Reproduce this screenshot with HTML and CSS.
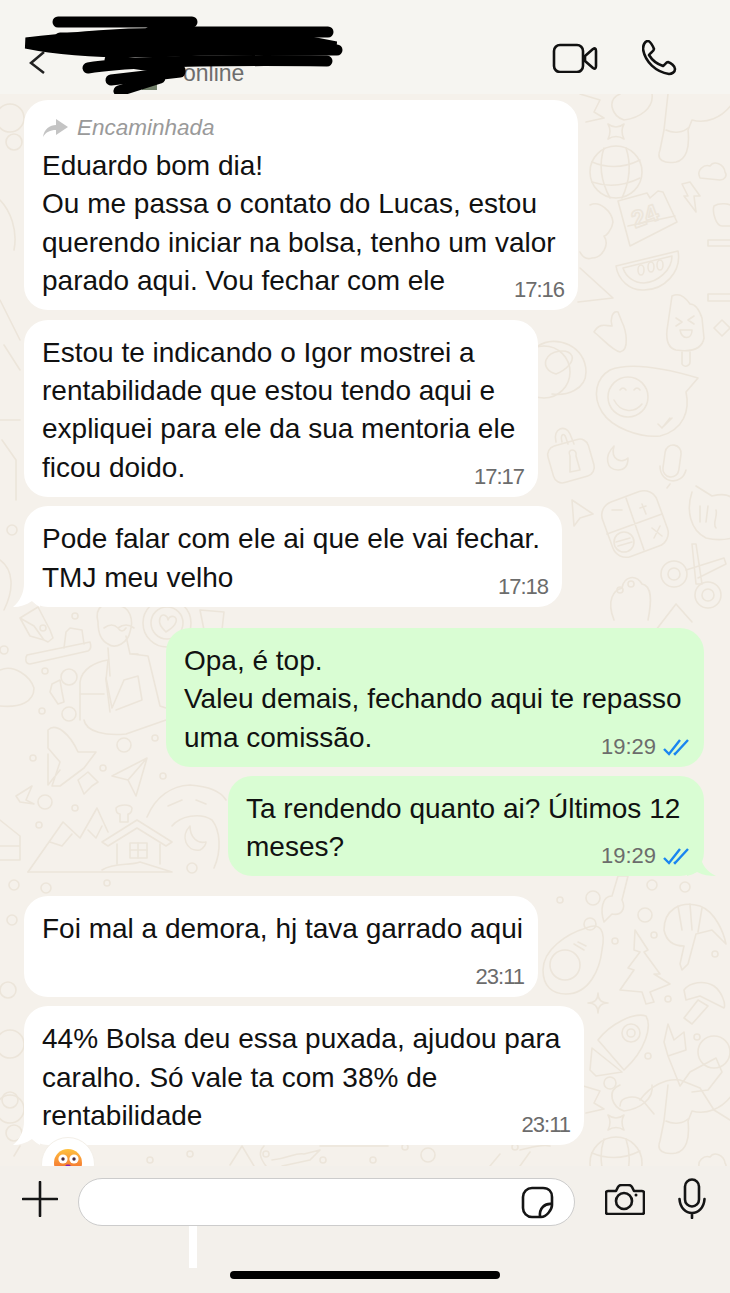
FILE: index.html
```html
<!DOCTYPE html>
<html>
<head>
<meta charset="UTF-8">
<meta name="viewport" content="width=device-width, initial-scale=1">
<link rel="stylesheet" href="styles.css">
</head>
<body>

<div class="phone">

  <div class="top-bar">
    <svg class="back" viewBox="0 0 18 24"><path d="M16 2 L3 13 L16 23"/></svg>
    <span class="status">online</span>
    <div class="top-icons">
      <svg class="ico-video" viewBox="0 0 46 30"><rect x="2" y="2" width="29" height="27" rx="6"/><path d="M33 13 L41 6 Q44 4 44 8 V23 Q44 27 41 25 L33 18 Z"/></svg>
      <svg class="ico-phone" viewBox="0 0 35 36"><path d="M1 9 C1 5 3 1 6 1 C8 1 11 6 12 9 C12 11 8 13 7 15 C10 20 15 24 21 26 C23 25 24 22 26 22 C29 23 33 26 33 29 C33 32 30 34 27 34 C14 32 3 22 1 9 Z"/></svg>
    </div>
    <!-- name and photo scribbled out -->
    <svg class="scribble" viewBox="0 0 730 100">
      <path class="avatar-bit" d="M142 78 H157 V90 H142 Z"/>
      <path class="avatar-bit" d="M142 52 H176 V56 H142 Z"/>
      <path d="M58 22 H192"/>
      <path d="M150 32 H328"/>
      <path d="M26 43 C70 38 120 32 180 34 L280 36 L336 47 L200 50 C130 54 70 52 26 43 Z" class="fill"/>
      <path d="M90 50 H337" />
      <path d="M60 38 H280"/>
      <path d="M88 68 C140 60 240 60 327 61"/>
      <path d="M111 80 L180 72"/>
      <path d="M119 91 L160 78"/>
      <path d="M110 60 L180 70" />
    </svg>
  </div>

  <div class="chat">
    <svg class="wallpaper" viewBox="0 94 730 1072">
      <defs>
        <g id="tile">
          <!-- top right: star, globe, calendar, melon -->
          <path d="M608 124 Q616 130 624 124 Q620 131 624 139 Q616 134 608 139 Q612 131 608 124 Z"/>
          <circle cx="616" cy="172" r="26"/>
          <path d="M592 162 Q616 172 640 160 M592 182 Q616 190 640 178 M604 148 Q596 172 610 198 M626 148 Q634 172 622 198"/>
          <path d="M618 201 L647 193 L650 198 L658 191 L663 192 L677 222 L630 246 Z M628 226 L675 216"/>
          <text x="632" y="226" class="doodle-num" transform="rotate(-20 640 218)">24</text>
          <path d="M616 266 L678 251 C682 272 664 290 644 290 C630 291 618 280 616 266 Z M623 268 L672 256 C672 270 658 282 644 283 C634 283 626 277 623 268 Z"/>
          <ellipse cx="641" cy="270" rx="3" ry="5"/><ellipse cx="651" cy="267" rx="3" ry="5"/><ellipse cx="660" cy="265" rx="3" ry="5"/>
          <!-- cloud, mountain -->
          <path d="M590 205 C600 200 612 212 613 222 C612 230 606 236 604 236 C610 245 602 258 592 258 C586 260 582 256 580 252"/>
          <path d="M580 268 L613 298 L578 302"/>
          <path d="M700 178 C696 170 704 164 710 166 C714 160 724 164 725 172 C728 176 724 180 720 180 Z"/>
          <path d="M682 184 L690 182 L700 196 L694 196 L696 212 L684 196 L688 196 Z"/>
          <path d="M714 206 C720 202 730 204 732 206 V226 H722 C716 226 712 212 714 206 Z"/>
          <path d="M708 240 H732 V246 H708 Z M708 294 H732 V301 H708 Z"/>
          <!-- popsicle, chili -->
          <path d="M672 296 C680 292 686 298 690 304 C696 304 700 312 702 318 L704 338 C702 350 690 352 676 350 C668 348 666 340 667 330 Z"/>
          <path d="M676 318 L682 322 L676 326 M694 316 L688 320 L694 324 M680 330 H692 C692 340 682 340 680 330 Z"/>
          <path d="M682 352 V364 C684 368 690 366 690 362 V352"/>
          <path d="M594 332 C604 340 612 350 620 352 C630 350 626 330 622 322 L618 312 C612 310 610 320 612 326 C606 326 600 322 594 332 Z"/>
          <path d="M722 320 L730 328 L722 336 L714 328 Z"/>
          <!-- legs at the top -->
          <path d="M668 94 L664 130 L660 150 C656 160 664 164 676 162 C686 160 690 148 688 130 L692 120 C706 124 722 118 732 104"/>
          <path d="M666 130 C674 134 684 132 688 128"/>
          <path d="M620 94 C606 100 612 116 624 120 C640 118 654 108 652 94"/>
          <path d="M580 94 L600 100 L594 112 L604 118 L586 122"/>
          <!-- chat bubble with smile -->
          <path d="M610 370 C630 362 664 368 698 378 L686 392 C690 410 684 430 660 436 C640 438 612 428 602 412 C592 396 596 378 610 370 Z"/>
          <circle cx="628" cy="397" r="20"/>
          <path d="M614 400 C620 412 634 414 642 404 M620 390 Q623 386 626 390 M634 390 Q637 386 640 390"/>
          <path d="M658 424 L662 428 L670 418 M664 426 L672 418"/>
          <circle cx="544" cy="372" r="26" class="thin"/>
          <path d="M538 346 C556 334 586 346 586 372 C586 390 566 396 552 394 M546 360 C550 350 568 348 572 356 C574 362 566 370 556 374 C548 372 544 366 546 360 Z"/>
          <!-- lock, moon, mic -->
          <rect x="550" y="442" width="42" height="38" rx="9" transform="rotate(-16 571 461)"/>
          <path d="M556 442 C552 428 566 424 570 434 L574 444 M562 442 C560 434 564 432 566 438 L568 444"/>
          <path d="M570 456 C566 448 578 448 576 456 L580 470 L570 472 Z"/>
          <path d="M614 446 C604 456 606 470 618 470 C626 470 628 464 628 458 C622 464 610 460 614 446 Z"/>
          <rect x="664" y="445" width="16" height="32" rx="8" transform="rotate(8 672 461)"/>
          <path d="M660 466 C660 484 682 486 686 470 M670 484 L667 488"/>
          <!-- calculator -->
          <rect x="606" y="495" width="58" height="58" rx="14" transform="rotate(-20 635 524)"/>
          <path d="M626 498 L644 550 M607 534 L662 514 M612 510 H622 M640 508 L646 506 M642 504 L646 514 M652 528 L662 536 M660 526 L654 538 M616 542 L630 538 M618 546 L632 542"/>
          <circle cx="624" cy="542" r="10"/>
          <!-- cat, arrow, scissors, paw -->
          <path d="M696 486 L712 496 C720 494 728 494 732 498 M692 492 C686 510 690 530 706 538 C714 540 724 540 732 538"/>
          <path d="M700 506 V522 M708 506 L706 522 M716 510 C718 516 712 524 716 528"/>
          <path d="M572 500 L593 514 L580 518 L574 526 Z"/>
          <circle cx="674" cy="574" r="13"/><circle cx="674" cy="574" r="6"/>
          <circle cx="708" cy="595" r="13"/><circle cx="708" cy="595" r="6"/>
          <path d="M686 570 L724 558 L726 564 L698 578 M692 544 L696 544 L702 584 L696 584 Z"/>
          <path d="M614 620 C606 600 614 590 622 588 C624 576 636 574 642 584 C652 586 652 600 648 620"/>
          <circle cx="620" cy="590" r="3"/><circle cx="631" cy="584" r="3"/>
          <path d="M656 630 L676 604 L692 622"/>
          <!-- below bubble 3: cup, cake, man -->
          <path d="M20 618 L38 607 L50 630 L53 638 L48 642 L44 640 L34 626 Z M20 618 L30 636 L44 640"/>
          <path d="M27 655 L90 642 C92 648 90 650 88 651 L30 664 C25 664 25 658 27 655 Z"/>
          <path d="M64 648 L66 632 L70 628 L82 630 L84 644"/>
          <path d="M98 622 C94 606 106 600 118 606 C130 606 134 620 130 632 C128 642 116 650 108 644 C100 640 98 632 98 622 Z"/>
          <path d="M104 628 Q112 622 118 628 Q126 622 134 628 M118 628 Q122 634 126 628"/>
          <path d="M108 648 L110 676 M126 636 L130 654 L138 654"/>
          <path d="M80 720 L80 682 C82 668 96 662 108 660 L106 680 L110 712 M132 654 L148 656 L160 706 L166 708"/>
          <path d="M80 694 L104 694 M84 720 C86 732 106 736 126 734 L166 720 M106 678 L112 708 L124 680 L138 676 L142 700 L116 710"/>
          <circle cx="167" cy="623" r="24"/><circle cx="167" cy="623" r="16"/>
          <path d="M160 618 C162 612 168 616 168 620 C170 614 178 616 176 622 C174 628 168 630 166 632 C162 628 158 624 160 618 Z"/>
          <path d="M200 610 L224 612 L222 630 L204 630 Z"/>
          <path d="M0 670 C14 664 30 676 34 688 C34 702 20 708 0 706"/>
          <path d="M52 684 L60 680 L62 692 L64 702 L58 704 L50 692 Z"/>
          <circle cx="69" cy="677" r="8"/><circle cx="45" cy="671" r="3"/><circle cx="42" cy="711" r="3"/><circle cx="69" cy="714" r="7"/><circle cx="43" cy="628" r="3"/><circle cx="75" cy="616" r="3"/><circle cx="4" cy="650" r="4"/>
          <circle cx="124" cy="745" r="7"/><circle cx="155" cy="738" r="3"/><circle cx="103" cy="768" r="3"/><circle cx="163" cy="776" r="3"/><circle cx="45" cy="802" r="7"/><circle cx="33" cy="758" r="3"/><circle cx="75" cy="808" r="3"/><circle cx="39" cy="825" r="3"/>
          <!-- rocket, plane, mountains, house -->
          <path d="M48 730 C56 722 70 734 78 752 L96 752 L84 768 L60 786 L52 786 L60 762 L48 748 Z M48 754 L48 785 L60 770"/>
          <path d="M78 780 L84 794 L92 786 L98 782 L88 772 Z"/>
          <path d="M112 776 L147 758 L136 796 L128 780 Z M128 780 L147 758"/>
          <path d="M16 796 L32 786 L26 800 L34 804 L20 802 Z" />
          <path d="M28 872 L63 822 L80 838 L97 808 L108 832 M50 842 L62 846 L72 834 M88 830 L96 838 L102 826"/>
          <path d="M28 872 H172 M102 870 C114 862 130 866 140 862 L172 872"/>
          <path d="M102 842 L137 820 L172 842 L166 846 L137 828 L108 846 Z"/>
          <path d="M117 844 V864 M160 844 V864"/>
          <rect x="130" y="843" width="17" height="15"/>
          <path d="M130 850 H147 M138 843 V858"/>
          <path d="M116 808 C120 804 130 804 132 808 C132 814 128 814 128 814 V822 H120 V814 C118 814 116 812 116 808 Z"/>
          <path d="M147 817 C156 796 172 786 190 785 C204 786 220 790 226 800 M168 806 L182 800 M196 800 L206 804 M172 826 C180 816 200 812 212 820 C220 830 222 850 214 868"/>
          <path d="M190 826 C180 836 186 852 200 850 C204 848 206 844 206 842 C198 844 190 838 190 826 Z"/>
          <circle cx="192" cy="868" r="5"/>
          <path d="M0 820 L20 836 V860 H0 M0 846 H20"/>
          <circle cx="14" cy="885" r="5"/><circle cx="46" cy="888" r="5"/><circle cx="107" cy="883" r="3"/>
          <!-- right side lower -->
          <path d="M543 970 C543 950 566 934 586 928 C600 922 606 930 602 950 C600 968 590 994 566 994 C552 994 543 986 543 970 Z"/>
          <circle cx="565" cy="965" r="15"/>
          <path d="M574 944 L584 950 M578 942 L586 946"/>
          <path d="M604 922 L612 914 C622 916 626 908 622 900 L628 876 L618 876 L612 896 C602 896 600 910 604 922 Z"/>
          <path d="M620 990 L634 970 L628 968 L640 952 L634 950 L635 930 L648 950 L644 952 L660 974 L654 974 L670 984 L650 992 L654 1002 L646 1004 L642 992 Z"/>
          <circle cx="645" cy="915" r="7"/><circle cx="652" cy="885" r="5"/><circle cx="685" cy="887" r="5"/><circle cx="615" cy="941" r="3"/><circle cx="654" cy="935" r="3"/><circle cx="715" cy="954" r="3"/><circle cx="668" cy="999" r="3"/><circle cx="560" cy="900" r="3"/><circle cx="590" cy="924" r="6"/><circle cx="593" cy="898" r="7"/>
          <path d="M664 930 C664 910 680 900 700 906 C716 912 724 934 726 944 L712 930 L696 934 L688 964 L682 970 L680 964 L684 946 C672 946 666 940 664 930 Z"/>
          <path d="M678 906 L682 930 M690 904 L692 930 M702 908 L698 932"/>
          <path d="M684 990 C690 982 704 980 714 986 C722 992 726 1004 724 1008 L700 996 L686 1000 Z M698 1000 L708 1006 L692 1024 L684 1018 Z"/>
          <path d="M598 993 Q598 1003 588 1003 Q598 1003 598 1013 Q598 1003 608 1003 Q598 1003 598 993 Z"/>
          <path d="M598 1040 C610 1024 634 1012 646 1016 C652 1026 646 1050 624 1070 Z M592 1048 L622 1072 L596 1076 L590 1070 Z"/>
          <circle cx="631" cy="1033" r="9"/><circle cx="631" cy="1033" r="4"/>
          <path d="M668 1024 L674 1040 L684 1032 L686 1050 L668 1056 L664 1042 Z M668 1056 L680 1086 L690 1072 L716 1058 L722 1072 L708 1090 L692 1092"/>
          <path d="M640 1100 C650 1086 666 1078 680 1080 L700 1088 L714 1110 L730 1120"/>
          <circle cx="714" cy="1052" r="16"/>
          <path d="M620 1106 C620 1096 636 1094 644 1102 L654 1114"/>
          <circle cx="610" cy="1083" r="6"/><circle cx="648" cy="1056" r="3"/><circle cx="697" cy="1037" r="3"/>
          <!-- left column bits -->
          <circle cx="10" cy="118" r="14"/><circle cx="14" cy="142" r="8"/>
          <path d="M0 200 C10 210 18 230 14 250 M0 300 L20 340 M4 345 L20 370 M0 420 H20 M2 440 L16 460 V500 M0 560 C14 570 14 590 4 610"/>
          <circle cx="10" cy="1044" r="14"/><circle cx="10" cy="1100" r="8"/>
          <circle cx="12" cy="920" r="5"/><circle cx="8" cy="990" r="8"/><circle cx="12" cy="530" r="5"/>
          <!-- strip under bubble 7 -->
          <path d="M230 1165 L242 1146 L254 1166 M266 1166 C260 1158 258 1152 264 1146 M72 1150 L80 1146 M20 1146 L14 1156"/>
          <path d="M272 1160 C290 1158 296 1152 304 1154 L320 1150 L310 1160 L282 1166"/>
          <path d="M320 1146 H388 M520 1150 C530 1148 540 1144 550 1146 M520 1166 L530 1152 M490 1166 L500 1154"/>
          <circle cx="266" cy="1154" r="3"/><circle cx="323" cy="1160" r="3"/><circle cx="373" cy="1160" r="3"/><circle cx="428" cy="1155" r="7"/><circle cx="405" cy="1147" r="3"/><circle cx="515" cy="1147" r="3"/>
          <circle cx="150" cy="1160" r="3"/><circle cx="190" cy="1154" r="3"/>
        </g>
      </defs>
      <use href="#tile"/>
      <use href="#tile" y="991"/>
    </svg>

    <div class="bubble in w1">
      <div class="forwarded">
        <svg viewBox="0 0 27 20"><path d="M1 19 C2 11 8 7 14 7 V1 L26 9 L14 17 V12 C8 12 4 14 1 19 Z"/></svg>
        Encaminhada
      </div>
      Eduardo bom dia!<br>
      Ou me passa o contato do Lucas, estou<br>
      querendo iniciar na bolsa, tenho um valor<br>
      parado aqui. Vou fechar com ele
      <span class="time tight">17:16</span>
    </div>

    <div class="bubble in w2">
      Estou te indicando o Igor mostrei a<br>
      rentabilidade que estou tendo aqui e<br>
      expliquei para ele da sua mentoria ele<br>
      ficou doido.
      <span class="time tight">17:17</span>
    </div>

    <div class="bubble in w3">
      Pode falar com ele ai que ele vai fechar.<br>
      TMJ meu velho
      <span class="time tight">17:18</span>
      <svg class="tail tail-in" viewBox="0 0 28 24"><path d="M12 0 C12 10 8 18 1 24 C8 24 14 22 20 18 C23 21 26 23 28 24 V0 Z"/></svg>
    </div>

    <div class="bubble out w4 new-group">
      Opa, é top.<br>
      Valeu demais, fechando aqui te repasso<br>
      uma comissão.
      <span class="time">19:29 <svg class="ticks" viewBox="0 0 27 18"><path d="M1 11 L6 16 L17 2 M11 15 L12 16 L25 2"/></svg></span>
    </div>

    <div class="bubble out w5">
      Ta rendendo quanto ai? Últimos 12<br>
      meses?
      <span class="time">19:29 <svg class="ticks" viewBox="0 0 27 18"><path d="M1 11 L6 16 L17 2 M11 15 L12 16 L25 2"/></svg></span>
      <svg class="tail tail-out" viewBox="0 0 30 20"><path d="M0 0 H14 C14 8 20 16 29 20 C22 20 16 19 10 16 C7 18 3 19 0 20 Z"/></svg>
    </div>

    <div class="bubble in w2 spaced">
      Foi mal a demora, hj tava garrado aqui
      <span class="time tight">23:11</span>
    </div>

    <div class="bubble in w7">
      44% Bolsa deu essa puxada, ajudou para<br>
      caralho. Só vale ta com 38% de<br>
      rentabilidade
      <span class="time tight">23:11</span>
      <svg class="tail tail-in" viewBox="0 0 28 24"><path d="M12 0 C12 10 8 18 1 24 C8 24 14 22 20 18 C23 21 26 23 28 24 V0 Z"/></svg>
      <div class="reaction">
        <svg viewBox="0 0 28 28">
          <defs><linearGradient id="face" x1="0" y1="0" x2="0" y2="1"><stop offset="0" stop-color="#ffc23f"/><stop offset="1" stop-color="#f0542c"/></linearGradient></defs>
          <circle cx="14" cy="14" r="14" fill="url(#face)"/>
          <circle cx="9" cy="10" r="4.6" fill="#fff"/><circle cx="20" cy="10" r="4.6" fill="#fff"/>
          <circle cx="9" cy="10" r="1.7" fill="#4a2a3a"/><circle cx="20" cy="10" r="1.7" fill="#4a2a3a"/>
          <ellipse cx="14" cy="18" rx="3" ry="2.4" fill="#8a1fb0"/>
        </svg>
      </div>
    </div>
  </div>

  <div class="bottom-bar">
    <div class="input-row">
      <svg class="ico-plus" viewBox="0 0 36 36"><path d="M18 1 V35 M1 18 H35"/></svg>
      <div class="msg-input">
        <svg class="ico-sticker" viewBox="0 0 33 33"><path d="M11 2 H22 C28 2 31 6 31 11 V19 C31 23 26 31 20 31 H11 C6 31 2 27 2 22 V11 C2 6 6 2 11 2 Z M31 18 C24 17 18 22 19 31"/></svg>
      </div>
      <svg class="ico-camera" viewBox="0 0 40 31"><path d="M3 7 H11 L13 3 Q14 1 17 1 H23 Q26 1 27 3 L29 7 H37 Q39 7 39 9 V28 Q39 30 37 30 H3 Q1 30 1 28 V9 Q1 7 3 7 Z"/><circle cx="19" cy="17" r="8"/><circle class="dot" cx="31" cy="11" r="1.5"/></svg>
      <svg class="ico-mic" viewBox="0 0 28 41"><rect x="7" y="1.5" width="14" height="27" rx="7"/><path d="M1.5 21 C2 30 8 35 14 35 C20 35 26 30 26.5 21 M14 35 V40"/></svg>
    </div>
    <span class="stick"></span>
    <span class="home-bar"></span>
  </div>

</div>

</body>
</html>
```

FILE: styles.css
```css
* {
  box-sizing: border-box;
}

html, body {
  margin: 0;
  padding: 0;
}

body {
  font-family: "Liberation Sans", Arial, sans-serif;
  color: #111;
}

.phone {
  width: 730px;
  height: 1293px;
  display: flex;
  flex-direction: column;
  overflow: hidden;
}

svg {
  display: block;
  flex: none;
}

/* header */
.top-bar {
  position: relative;
  height: 94px;
  flex: none;
  background-color: #f6f5f1;
  display: flex;
  align-items: flex-start;
}

.back {
  width: 18px;
  height: 24px;
  margin: 50px 0 0 28px;
  fill: none;
  stroke: #222;
  stroke-width: 2.5;
}

.status {
  margin: 60px 0 0 137px;
  font-size: 23px;
  line-height: 26px;
  color: #6d6d6d;
}

.top-icons {
  margin-left: auto;
  padding: 40px 53px 0 0;
  display: flex;
  gap: 44px;
}

.top-icons svg {
  fill: none;
  stroke: #111;
  stroke-width: 2.6;
  stroke-linejoin: round;
}

.ico-video {
  width: 46px;
  height: 30px;
  margin-top: 3px;
}

.ico-phone {
  width: 35px;
  height: 36px;
}

.scribble {
  position: absolute;
  left: 0;
  top: 0;
  width: 730px;
  height: 100px;
  fill: none;
  stroke: #000;
  stroke-width: 11;
  stroke-linecap: round;
}

.scribble .fill {
  fill: #000;
}

.scribble .avatar-bit {
  fill: #72806a;
  stroke: none;
}

/* messages */
.chat {
  position: relative;
  flex: 1;
  min-height: 0;
  overflow: hidden;
  background-color: #f5f1eb;
  padding-top: 6px;
  display: flex;
  flex-direction: column;
  align-items: flex-start;
}

.wallpaper {
  position: absolute;
  left: 0;
  top: 0;
  width: 730px;
  height: 1072px;
  fill: none;
  stroke: #ece5da;
  stroke-width: 1.6;
  stroke-linecap: round;
  stroke-linejoin: round;
}

.doodle-num {
  font-size: 24px;
  font-weight: bold;
  font-family: "Liberation Sans", sans-serif;
}

.bubble {
  position: relative;
  margin: 9.5px 0 0 24px;
  padding: 14px 0 10px 18px;
  font-size: 28px;
  line-height: 38.3px;
  border-radius: 24px;
  background-color: #fff;
}

.bubble:first-of-type {
  margin-top: 0;
}

.bubble.out {
  align-self: flex-end;
  margin: 9px 26px 0 0;
  background-color: #d9fdd3;
}

.bubble.new-group {
  margin-top: 21px;
}

.bubble.spaced {
  margin-top: 20px;
  padding-bottom: 48px;
}

.w1 { width: 554px; }
.w2 { width: 514px; }
.w3 { width: 538px; }
.w4 { width: 538px; }
.w5 { width: 476px; }
.w7 { width: 560px; }

.forwarded {
  display: flex;
  align-items: center;
  gap: 8px;
  height: 28px;
  margin-bottom: 5px;
  font-size: 22.5px;
  line-height: 28px;
  font-style: italic;
  color: #9a9a9a;
}

.forwarded svg {
  width: 27px;
  height: 20px;
  fill: #c4c4c4;
}

.time {
  position: absolute;
  right: 14px;
  bottom: 6px;
  display: flex;
  align-items: center;
  gap: 7px;
  font-size: 22px;
  line-height: 28px;
  color: #6c6c6c;
}

.time.tight {
  letter-spacing: -1px;
}

.ticks {
  width: 27px;
  height: 18px;
  fill: none;
  stroke: #1a85f0;
  stroke-width: 2.4;
}

.tail {
  position: absolute;
  bottom: 0;
  fill: #fff;
}

.tail-in {
  left: -12px;
  width: 28px;
  height: 24px;
}

.tail-out {
  right: -13px;
  width: 30px;
  height: 20px;
  fill: #d9fdd3;
}

.reaction {
  position: absolute;
  left: 17px;
  top: 131px;
  width: 54px;
  height: 54px;
  padding: 11px 12px;
  border-radius: 50%;
  background-color: #fff;
  border: 1px solid #f3efe8;
}

.reaction svg {
  width: 28px;
  height: 28px;
}

/* footer */
.bottom-bar {
  position: relative;
  height: 127px;
  flex: none;
  background-color: #f3f0eb;
  display: flex;
  flex-direction: column;
  align-items: center;
}

.input-row {
  width: 100%;
  padding: 12px 22px 0;
  display: flex;
  align-items: flex-start;
}

.input-row svg {
  fill: none;
  stroke: #151515;
  stroke-width: 2.6;
  stroke-linecap: round;
  stroke-linejoin: round;
}

.ico-plus {
  width: 36px;
  height: 36px;
  margin-top: 3px;
}

.msg-input {
  width: 497px;
  height: 48px;
  margin-left: 20px;
  padding: 7px 0 0 442px;
  border-radius: 24px;
  background-color: #fff;
  border: 1px solid #ccc;
}

.ico-sticker {
  width: 33px;
  height: 33px;
}

.ico-camera {
  width: 40px;
  height: 31px;
  margin: 6px 0 0 30px;
}

.ico-camera .dot {
  fill: #111;
  stroke: none;
}

.ico-mic {
  width: 28px;
  height: 41px;
  margin-left: 33px;
}

.stick {
  position: absolute;
  left: 189px;
  top: 60px;
  width: 8px;
  height: 42px;
  background-color: #fff;
}

.home-bar {
  margin-top: auto;
  margin-bottom: 14px;
  width: 270px;
  height: 8px;
  border-radius: 4px;
  background-color: #000;
}
```
